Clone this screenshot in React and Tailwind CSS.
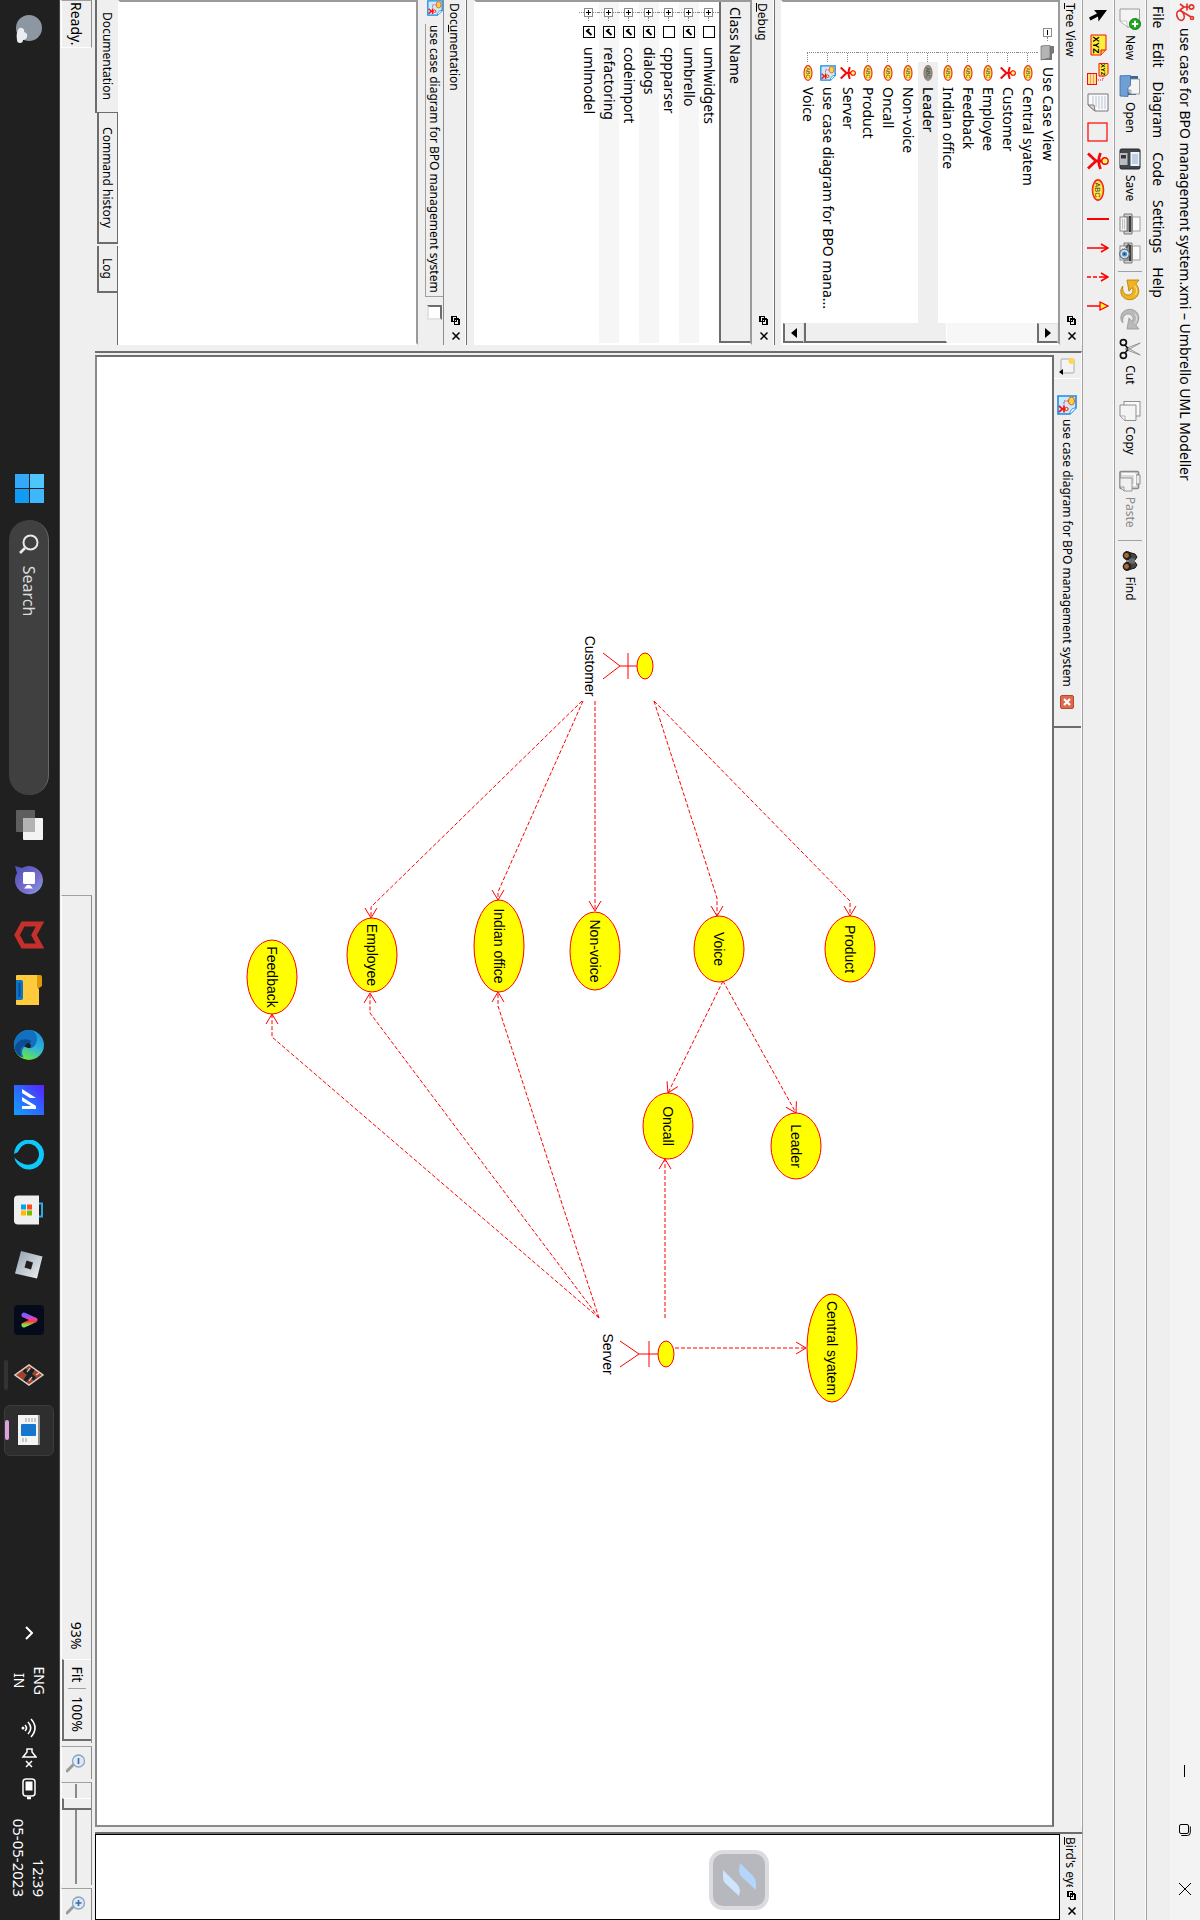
import React from "react";

/* ---------- small helpers ---------- */

const sunken = "border-2 border-t-[#9a9a9a] border-l-[#9a9a9a] border-r-white border-b-white";

function FloatIcon() {
  return (
    <svg viewBox="0 0 9 9" className="h-[9px] w-[9px]" stroke="#000" strokeWidth="1.2" fill="#efefef" shapeRendering="crispEdges">
      <path d="M3 1.5h5.500v4H3zM3 1h5.500M.5 3.500h5v4.500h-5zM0 3.500h6" />
    </svg>
  );
}

function CloseIcon() {
  return (
    <svg viewBox="0 0 8 8" className="h-2 w-2" stroke="#000" strokeWidth="1.5">
      <path d="M.5.5l7 7M7.500.5l-7 7" />
    </svg>
  );
}

function DockTitle({ children, name }) {
  return (
    <div className="flex h-[22px] shrink-0 items-start border-t border-white pr-px pl-[3px]">
      <h2 className="min-w-0 flex-1 overflow-hidden text-[12px] leading-[21px] whitespace-nowrap">{children}</h2>
      <button aria-label={`Float ${name}`} className="flex h-[18px] w-4 items-center justify-center"><FloatIcon /></button>
      <button aria-label={`Close ${name}`} className="flex h-[18px] w-4 items-center justify-center"><CloseIcon /></button>
    </div>
  );
}

/* ---------- tool icons ---------- */

function NewIcon() {
  return (
    <svg viewBox="0 0 22 22" className="h-[22px] w-[22px]">
      <path d="M1 1.500h18v12l-6 7.500H1z" fill="#f4f4f4" stroke="#9b9b9b" />
      <path d="M13 21v-6.500l6-1z" fill="#fff" stroke="#b5b5b5" strokeWidth=".7" />
      <circle cx="16" cy="6" r="5.600" fill="#1ea51e" stroke="#0c7a10" strokeWidth=".8" />
      <path d="M16 2.800v6.400M12.800 6h6.400" stroke="#fff" strokeWidth="2" />
    </svg>
  );
}

function OpenIcon() {
  return (
    <svg viewBox="0 0 22 22" className="h-[22px] w-[22px]">
      <path d="M1 3h7l2 2h10v14H1z" fill="#3a659c" />
      <path d="M4 1.500h15v9l-3 4H4z" fill="#f5f5f5" stroke="#8a8a8a" strokeWidth=".8" />
      <path d="M15 14v-4h4z" fill="#ccc" stroke="#888" strokeWidth=".6" />
      <path d="M.5 10.500h10l2 2.500h9l-.5 8H.8z" fill="#6f9fd3" stroke="#3b6ba6" strokeWidth=".8" />
    </svg>
  );
}

function SaveIcon() {
  return (
    <svg viewBox="0 0 22 22" className="h-[22px] w-[22px]">
      <rect x="1" y="1" width="20" height="20" rx="1.500" fill="#41464d" stroke="#25282c" />
      <rect x="4" y="1.500" width="14" height="9" fill="#eef3fa" />
      <path d="M6 4h10M6 6h10M6 8h10" stroke="#8aa4c8" strokeWidth=".9" />
      <rect x="5" y="13.500" width="12" height="7.500" fill="#b9bcc0" />
      <rect x="7" y="15" width="3.500" height="5" fill="#33373c" />
    </svg>
  );
}

function PrintIcon({ preview }) {
  return (
    <svg viewBox="0 0 22 22" className="h-[22px] w-[22px]">
      <rect x="4" y="1" width="14" height="9" fill="#fbfbfb" stroke="#9a9a9a" strokeWidth=".9" />
      <path d="M1 9h3v8H1zM18 9h3v8h-3z" fill="#d0d0d0" stroke="#6d6d6d" strokeWidth=".9" />
      <path d="M4 8h14v9H4z" fill="#8d8d8d" />
      <path d="M3 11h16" stroke="#3e3e3e" strokeWidth="2" />
      <rect x="4" y="14" width="14" height="7" fill="#f2f2f2" stroke="#808080" strokeWidth=".9" />
      <path d="M6 16.500h10M6 18.500h10" stroke="#b0b0b0" strokeWidth=".8" />
      {preview && (
        <g>
          <path d="M6 15l-4-3" stroke="#555" strokeWidth="2" />
          <circle cx="12" cy="16.500" r="4.800" fill="#cfe2f2" stroke="#66727c" strokeWidth="1.300" />
          <circle cx="12" cy="16.500" r="2.500" fill="#4b8fc9" />
          <circle cx="12" cy="16.500" r="1" fill="#123a5e" />
        </g>
      )}
    </svg>
  );
}

function UndoIcon({ redo }) {
  const fill = redo ? "#b9b9b9" : "#efb422";
  const edge = redo ? "#9b9b9b" : "#b8800c";
  return (
    <svg viewBox="0 0 22 22" className="h-[22px] w-[22px]">
      <g transform={redo ? "matrix(-1 0 0 1 22 0)" : undefined}>
        <path
          d="M1 2l4 3.200C8 2 14 .8 18 4.500c4 4 3.500 11-1 14.200-3 2-7 2-10-.5 4 .6 7.500-.4 8.600-3.400 1.300-3.500-1-6.800-4.400-6.800-1 0-2 .4-2.600 1l3.600 3L1 14z"
          fill={fill} stroke={edge} strokeWidth=".9"
        />
        <path d="M6.500 6.500C9 4 13.500 3.500 16 6" fill="none" stroke="#fff" strokeOpacity=".6" />
      </g>
    </svg>
  );
}

function CutIcon() {
  return (
    <svg viewBox="0 0 22 22" className="h-[22px] w-[22px]">
      <path d="M5 .8l7.500 13-2 1.500zM17 .8L9.500 13.800l2 1.500z" fill="#f3f3f3" stroke="#8a8a8a" strokeWidth=".9" />
      <ellipse cx="4.500" cy="17.600" rx="2.800" ry="3" fill="none" stroke="#111" strokeWidth="1.700" />
      <ellipse cx="17.500" cy="17.600" rx="2.800" ry="3" fill="none" stroke="#111" strokeWidth="1.700" />
      <path d="M7 16l3.500-3M15 16l-3.500-3" stroke="#111" strokeWidth="1.500" />
    </svg>
  );
}

function CopyIcon() {
  return (
    <svg viewBox="0 0 22 22" className="h-[22px] w-[22px]">
      <rect x="1.500" y="1" width="14.500" height="16" fill="#fafafa" stroke="#8f8f8f" />
      <path d="M5 5h15.500v11l-4.500 5H5z" fill="#f4f4f4" stroke="#8f8f8f" />
      <path d="M16 21v-5h4.500z" fill="#fff" stroke="#9a9a9a" strokeWidth=".8" />
    </svg>
  );
}

function PasteIcon() {
  return (
    <svg viewBox="0 0 22 22" className="h-[22px] w-[22px]">
      <rect x="1.500" y="2.500" width="17" height="18.500" rx="1" fill="#dadada" stroke="#8b8b8b" strokeWidth="1.600" />
      <path d="M5 1h9v4H5z" fill="#eee" stroke="#8b8b8b" />
      <path d="M4 6h11v4M4 6v13" stroke="#f8f8f8" strokeWidth="2" fill="none" />
      <path d="M8 9h13v8l-4 4H8z" fill="#f1f1f1" stroke="#979797" />
      <path d="M17 21v-4h4" fill="none" stroke="#979797" />
    </svg>
  );
}

function FindIcon() {
  return (
    <svg viewBox="0 0 22 22" className="h-[22px] w-[22px]">
      <path d="M4 6l3-2 3 2v9H1.500zM18 6l-3-2-3 2v9h8.500z" fill="#454545" stroke="#161616" />
      <rect x="8.500" y="6" width="5" height="6" fill="#6c6c6c" />
      <circle cx="5.500" cy="14" r="4.300" fill="#222" />
      <circle cx="16.500" cy="14" r="4.300" fill="#222" />
      <circle cx="5.500" cy="14.500" r="2.400" fill="#b06a2a" />
      <circle cx="16.500" cy="14.500" r="2.400" fill="#b06a2a" />
    </svg>
  );
}

function ActorGlyph({ className }) {
  return (
    <svg viewBox="0 0 20 22" className={className}>
      <ellipse cx="10" cy="4" rx="3.200" ry="3.200" fill="#ff6" stroke="#f00" strokeWidth="1.400" />
      <path d="M10 7v6M2 8.500q8 3.500 16 0M2.500 21l7.500-8 7.500 8" fill="none" stroke="#f00a0a" strokeWidth="2.800" />
    </svg>
  );
}

function UseCaseGlyph({ className, dim }) {
  return (
    <svg viewBox="0 0 24 14" className={className}>
      <ellipse cx="12" cy="7" rx="11" ry="6" fill={dim ? "#8f9a82" : "#ffe94a"} stroke={dim ? "#96707a" : "#f3311b"} strokeWidth="1.800" />
      <text x="12" y="10" textAnchor="middle" fontSize="8" fontFamily="Liberation Sans, sans-serif" fill="#333">ABC</text>
    </svg>
  );
}

function DiagramGlyph({ className }) {
  return (
    <svg viewBox="0 0 20 20" className={className}>
      <path d="M1 1h12l6 6v12H1z" fill="#cdeafd" stroke="#1d8be0" strokeWidth="1.600" />
      <path d="M13 1c0 4 2 6 6 6" fill="#fff" stroke="#1d8be0" />
      <ellipse cx="6" cy="5.500" rx="4" ry="3" fill="#ffd23e" stroke="#e4572a" />
      <path d="M6 9v4h4" fill="none" stroke="#e22" strokeDasharray="1.500 1" />
      <circle cx="14" cy="10.500" r="1.600" fill="#ff9" stroke="#f00" />
      <path d="M14 12v2.500M10.500 13h7M11 18l3-3.500 3 3.500" stroke="#f01818" strokeWidth="1.800" fill="none" />
    </svg>
  );
}

function ArrowPointer() {
  return (
    <svg viewBox="0 0 14 22" className="h-[22px] w-[14px]">
      <path d="M1 2v13l3.500-3 4 8 3-1.500-4-7.500 5-.5z" fill="#000" />
    </svg>
  );
}

function NoteGlyph() {
  return (
    <svg viewBox="0 0 22 22" className="h-[22px] w-[22px]">
      <path d="M1 3h15l5 5v10H1z" fill="#ffef3c" stroke="#e11" />
      <path d="M16 3v5h5" fill="#ffb14a" stroke="#e11" />
      <text x="11" y="16" textAnchor="middle" fontSize="9" fontWeight="700" fontFamily="Liberation Sans, sans-serif">XYZ</text>
    </svg>
  );
}

function AnchorGlyph() {
  return (
    <svg viewBox="0 0 22 22" className="h-[22px] w-[22px]">
      <path d="M.5 1h10l2.500 2.500V10H.5z" fill="#ffef3c" stroke="#e11" />
      <text x="6.500" y="8.500" textAnchor="middle" fontSize="6" fontWeight="700" fontFamily="Liberation Sans, sans-serif">XYZ</text>
      <path d="M13 6h4v6" fill="none" stroke="#e11" strokeDasharray="1 1" />
      <rect x="10.500" y="12.500" width="11" height="9" fill="#ffe07a" stroke="#e11" />
      <path d="M11 15.500h10M11 18.500h10" stroke="#e88" strokeWidth=".8" />
    </svg>
  );
}

function TextPageGlyph() {
  return (
    <svg viewBox="0 0 20 22" className="h-[22px] w-5">
      <path d="M1 1h17v13l-6 7H1z" fill="#fafafa" stroke="#777" />
      <path d="M3 4h13M3 7h13M3 10h13M3 13h11M3 16h8" stroke="#b8c4d8" strokeWidth="1" />
      <path d="M12 21v-6l6-1z" fill="#ddd" stroke="#777" />
    </svg>
  );
}

function LineGlyph({ kind }) {
  return (
    <svg viewBox="0 0 12 22" className="h-[22px] w-3" stroke="#f00" fill="none" strokeWidth="1.600">
      {kind === "plain" && <path d="M6 0v22" strokeWidth="2" />}
      {kind === "arrow" && <path d="M6 1v21M2 8l4-7 4 7" />}
      {kind === "dashed" && <path d="M6 22v-4m0-2v-4m0-2V1M2 8l4-7 4 7" />}
      {kind === "closed" && <path d="M6 9v13M2 9h8L6 1z" fill="#fe3" strokeWidth="1.300" />}
    </svg>
  );
}

/* ---------- bars ---------- */

function TitleBar() {
  return (
    <header className="flex h-[30px] shrink-0 items-center bg-[#f3f3f3] pl-[2px]">
      <svg viewBox="0 0 20 20" className="h-5 w-5" fill="none" stroke="#e0342c" strokeWidth="1.700">
        <ellipse cx="13.500" cy="14.500" rx="5" ry="3.500" transform="rotate(-20 13.500 14.500)" />
        <circle cx="5" cy="3.500" r="2.200" />
        <path d="M5 6v5M1.500 8h7M2 15l3-4 3 4M8 15.500L15 4" />
        <circle cx="16" cy="3" r="1.500" />
      </svg>
      <h1 className="ml-[6px] flex-1 text-[14px] leading-5 whitespace-nowrap">use case for BPO management system.xmi – Umbrello UML Modeller</h1>
      <button aria-label="Minimize" className="flex h-full w-[59px] items-center justify-center">
        <svg viewBox="0 0 12 12" className="h-3 w-3" stroke="#000"><path d="M0 6.500h12" /></svg>
      </button>
      <button aria-label="Restore" className="flex h-full w-[59px] items-center justify-center">
        <svg viewBox="0 0 12 12" className="h-3 w-3" stroke="#000" fill="none"><rect x=".5" y="2.500" width="9" height="9" rx="1.500" /><path d="M2.500.7h6a3 3 0 0 1 3 3v6" /></svg>
      </button>
      <button aria-label="Close" className="mr-[2px] flex h-full w-[59px] items-center justify-center">
        <svg viewBox="0 0 12 12" className="h-3 w-3" stroke="#000"><path d="M0 0l12 12M12 0L0 12" /></svg>
      </button>
    </header>
  );
}

function MenuBar() {
  return (
    <nav className="flex h-6 shrink-0 items-center gap-[14px] border-b border-[#a0a0a0] pl-[6px] text-[14px] leading-5">
      {["File", "Edit", "Diagram", "Code", "Settings", "Help"].map((m) => (
        <button key={m}>{m}</button>
      ))}
    </nav>
  );
}

function ToolButton({ icon, label, disabled }) {
  return (
    <button aria-label={label} className={`flex items-center gap-[5px] text-[12px] leading-4 ${disabled ? "text-[#8a8a8a]" : ""}`}>
      {icon}
      <span>{label}</span>
    </button>
  );
}

function MainToolbar() {
  return (
    <div className="flex h-8 shrink-0 items-center border-t border-b border-t-white border-b-[#a0a0a0] pl-2">
      <div className="flex items-center gap-[15px]">
        <ToolButton icon={<NewIcon />} label="New" />
        <ToolButton icon={<OpenIcon />} label="Open" />
        <ToolButton icon={<SaveIcon />} label="Save" />
      </div>
      <button aria-label="Print" className="ml-3"><PrintIcon /></button>
      <button aria-label="Print preview" className="ml-[7px]"><PrintIcon preview /></button>
      <span className="mx-[7px] h-6 w-px bg-[#a0a0a0]" />
      <button aria-label="Undo"><UndoIcon /></button>
      <button aria-label="Redo" className="ml-[7px]"><UndoIcon redo /></button>
      <div className="ml-2 flex items-center gap-[15px]">
        <ToolButton icon={<CutIcon />} label="Cut" />
        <ToolButton icon={<CopyIcon />} label="Copy" />
        <ToolButton icon={<PasteIcon />} label="Paste" disabled />
      </div>
      <span className="mr-[9px] ml-3 h-6 w-px bg-[#a0a0a0]" />
      <ToolButton icon={<FindIcon />} label="Find" />
    </div>
  );
}

function DiagramToolbar() {
  const tools = [
    ["Select", <ArrowPointer />],
    ["Note", <NoteGlyph />],
    ["Anchor", <AnchorGlyph />],
    ["Text line", <TextPageGlyph />],
    ["Box", <svg viewBox="0 0 20 22" className="h-[22px] w-5"><rect x="1" y="2" width="18" height="19" fill="none" stroke="#f00" strokeWidth="1.200" /></svg>],
    ["Actor", <ActorGlyph className="h-[22px] w-5" />],
    ["Use case", <UseCaseGlyph className="h-[14px] w-[22px]" />],
    ["Association", <LineGlyph kind="plain" />],
    ["Directional association", <LineGlyph kind="arrow" />],
    ["Dependency", <LineGlyph kind="dashed" />],
    ["Generalization", <LineGlyph kind="closed" />],
  ];
  return (
    <div className="flex h-8 shrink-0 items-center gap-[3px] border-t border-b border-t-white border-b-[#a0a0a0] pl-[3px]">
      {tools.map(([name, icon]) => (
        <button key={name} aria-label={name} className="flex h-[26px] w-[26px] items-center justify-center">{icon}</button>
      ))}
    </div>
  );
}

/* ---------- left docks ---------- */

const treeItems = [
  ["Central syatem", "case"], ["Customer", "actor"], ["Employee", "case"], ["Feedback", "case"],
  ["Indian office", "case"], ["Leader", "case"], ["Non-voice", "case"], ["Oncall", "case"],
  ["Product", "case"], ["Server", "actor"], ["use case diagram for BPO mana...", "diagram"], ["Voice", "case"],
];

function Expander({ open }) {
  return (
    <svg viewBox="0 0 9 9" className="h-[9px] w-[9px] shrink-0" fill="#fff" stroke="#8c8c8c" shapeRendering="crispEdges">
      <rect x=".5" y=".5" width="8" height="8" />
      <path d={open ? "M2 4.500h5" : "M2 4.500h5M4.500 2v5"} stroke="#000" />
    </svg>
  );
}

function ScrollArrow({ up }) {
  return (
    <button aria-label={up ? "Scroll up" : "Scroll down"} className="flex h-[21px] shrink-0 items-center justify-center border-t border-r-2 border-b-2 border-l border-t-[#e3e3e3] border-r-[#6d6d6d] border-b-[#6d6d6d] border-l-[#e3e3e3] bg-[#efefef]">
      <svg viewBox="0 0 10 6" className="h-[6px] w-[10px]"><path d={up ? "M0 6L5 0l5 6z" : "M0 0l5 6 5-6z"} fill="#000" /></svg>
    </button>
  );
}

function TreeDock() {
  return (
    <section className="flex h-[308px] shrink-0 flex-col border-b border-[#6d6d6d]">
      <DockTitle name="Tree View"><u>T</u>ree View</DockTitle>
      <div className={`mb-[6px] flex min-h-0 flex-1 bg-white ${sunken}`}>
        <div className="min-w-0 flex-1 text-[14px] leading-5">
          <div className="flex h-5 items-center pl-[26px]">
            <Expander open />
            <span className="w-1 border-t border-dotted border-[#888]" />
            <svg viewBox="0 0 16 16" className="ml-1 h-4 w-4"><path d="M1 2h7l1 2h6v11H1z" fill="#777" /><path d="M0 6h13l2 9H1z" fill="#b4b4b4" stroke="#6c6c6c" strokeWidth=".7" /></svg>
            <span className="ml-[6px]">Use Case View</span>
          </div>
          <ul className="ml-[50px]">
            {treeItems.map(([name, kind], i) => (
              <li key={name} className="flex h-5 items-stretch">
                <span className={`w-px border-l border-dotted border-[#888] ${i === treeItems.length - 1 ? "h-[11px]" : ""}`} />
                <span className="h-[11px] w-[9px] border-b border-dotted border-[#888]" />
                <span className={`flex flex-1 items-center pl-[3px] ${name === "Leader" ? "bg-[#efefef]" : ""}`}>
                  {kind === "case" && <UseCaseGlyph className="h-[10px] w-4" dim={name === "Leader"} />}
                  {kind === "actor" && <ActorGlyph className="h-4 w-4" />}
                  {kind === "diagram" && <DiagramGlyph className="h-4 w-4" />}
                  <span className="ml-[6px] whitespace-nowrap">{name}</span>
                </span>
              </li>
            ))}
          </ul>
        </div>
        <div className="flex w-5 shrink-0 flex-col bg-[#f7f7f7]">
          <ScrollArrow up />
          <div className="flex-1" />
          <div className="h-[143px] border-t border-r-2 border-b-2 border-t-white border-r-[#6d6d6d] border-b-[#6d6d6d] bg-[#efefef]" />
          <ScrollArrow />
        </div>
      </div>
    </section>
  );
}

function DebugDock() {
  const rows = [["umlwidgets", false], ["umbrello", true], ["cppparser", false], ["dialogs", true], ["codeimport", true], ["refactoring", true], ["umlmodel", true]];
  return (
    <section className="flex h-[308px] shrink-0 flex-col border-b border-[#6d6d6d]">
      <DockTitle name="Debug"><u>D</u>ebug</DockTitle>
      <div className={`mb-[7px] min-h-0 flex-1 bg-white ${sunken}`}>
        <div className="h-[31px] border-r-2 border-b-2 border-[#6d6d6d] bg-[#efefef] pl-[5px] text-[14px] leading-[30px]">Class Name</div>
        <ul className="text-[14px] leading-5">
          {rows.map(([name, on]) => (
            <li key={name} className="flex h-5 items-center pl-[6px] even:bg-[#f6f6f6]">
              <span className="flex h-5 flex-col items-center">
                <span className="flex-1 border-l border-dotted border-[#888]" />
                <Expander />
                <span className="flex-1 border-l border-dotted border-[#888]" />
              </span>
              <span className="w-1 border-t border-dotted border-[#888]" />
              <label className="flex items-center">
                <span className="ml-[5px] grid h-3 w-3 items-center">
                  <input type="checkbox" defaultChecked={on} className="peer col-start-1 row-start-1 h-3 w-3 appearance-none border border-black bg-white" />
                  <svg viewBox="0 0 12 12" className="pointer-events-none invisible col-start-1 row-start-1 h-3 w-3 peer-checked:visible" fill="none" stroke="#000" strokeWidth="2"><path d="M3 5.500l2 2.500 4-4.500" /></svg>
                </span>
                <span className="ml-[9px]">{name}</span>
              </label>
            </li>
          ))}
        </ul>
      </div>
    </section>
  );
}

function DocumentationDock() {
  return (
    <section className="flex min-h-0 flex-1 flex-col">
      <DockTitle name="Documentation">Doc<u>u</u>mentation</DockTitle>
      <div className="flex h-[26px] shrink-0 items-start border-t border-[#8c8c8c]">
        <DiagramGlyph className="h-4 w-4" />
        <label htmlFor="doc-modified" className="ml-2 border-r border-b border-[#a0a0a0] pr-[3px] pl-px text-[12px] leading-[17px] whitespace-nowrap">use case diagram for BPO management system</label>
        <input id="doc-modified" type="checkbox" className="mt-px ml-2 h-[15px] w-[15px] appearance-none border-2 border-t-[#6d6d6d] border-r-[#e3e3e3] border-b-[#e3e3e3] border-l-[#6d6d6d] bg-white" />
      </div>
      <textarea aria-label="Documentation text" className={`block min-h-0 w-full flex-1 resize-none bg-white outline-none ${sunken}`} />
      <div role="tablist" className="flex h-[23px] shrink-0 items-start text-[12px] leading-5">
        <button role="tab" aria-selected="true" className="h-[23px] w-[113px] border-r border-b-2 border-[#6d6d6d]">Documentation</button>
        <button role="tab" aria-selected="false" className="h-[21px] w-[131px] border-t border-r-2 border-b-2 border-[#6d6d6d]">Command history</button>
        <button role="tab" aria-selected="false" className="ml-[2px] h-[21px] w-[47px] border-t border-r-2 border-b-2 border-[#6d6d6d]">Log</button>
        <span className="h-px flex-1 bg-[#6d6d6d]" />
      </div>
    </section>
  );
}

/* ---------- diagram canvas ---------- */

const useCases = [
  ["Product", 949, 350, 33], ["Voice", 949, 481, 33], ["Non-voice", 951, 605, 39],
  ["Indian office", 946, 701, 46], ["Employee", 955, 828, 37], ["Feedback", 977, 928, 37],
  ["Oncall", 1126, 532, 33], ["Leader", 1146, 404, 33], ["Central syatem", 1348, 368, 54],
];

/* name, x, head y, hip y, feet y, label y */
const actors = [["Customer", 666, 555, 580, 597, 610], ["Server", 1354, 534, 561, 580, 592]];

const links = [
  "M701 546L901 350H916", "M701 546L898 483H916", "M701 605H911", "M701 617L892 702L900 702",
  "M701 618L907 829H918", "M1318 601L1006 702H992", "M1318 601L1013 830H993", "M1318 601L1037 928H1014",
  "M1318 535H1159", "M1348 525V394", "M981 477L1113 404", "M981 477L1093 532",
];

const heads = [
  [916, 350, 0], [916, 483, 0], [911, 605, 0], [900, 702, 0], [918, 829, 0],
  [992, 702, 180], [993, 830, 180], [1014, 928, 180], [1159, 535, 180], [1348, 394, -90],
  [1113, 404, -29], [1093, 532, 26],
];

function Canvas() {
  return (
    <svg className="block h-full w-full" role="img" aria-label="Use case diagram" fontFamily="Liberation Sans, Arial, sans-serif" fontSize="14">
      <g transform="translate(-357 -148)">
        <g fill="none" stroke="#f00">
          <g strokeDasharray="4 2">{links.map((d) => <path key={d} d={d} />)}</g>
          {heads.map(([x, y, a]) => <path key={`${x}-${y}`} d="M-10 -6L0 0L-10 6" transform={`translate(${x} ${y}) rotate(${a})`} />)}
        </g>
        {useCases.map(([name, x, y, rx]) => (
          <g key={name}>
            <ellipse cx={x} cy={y} rx={rx} ry="25" fill="#ff0" stroke="#f00" />
            <text x={x} y={y + 5} textAnchor="middle">{name}</text>
          </g>
        ))}
        {actors.map(([name, x, y, hip, feet, ty]) => (
          <g key={name}>
            <path d={`M${x} ${y}V${hip}M${x - 13} ${y + 17}h26M${x - 13} ${feet}L${x} ${hip}L${x + 13} ${feet}`} fill="none" stroke="#f00" />
            <ellipse cx={x} cy={y} rx="13" ry="8" fill="#ff0" stroke="#f00" />
            <text x={x} y={ty + 5} textAnchor="middle">{name}</text>
          </g>
        ))}
      </g>
    </svg>
  );
}

function DiagramArea() {
  return (
    <main className="flex min-w-0 flex-1 flex-col border-t border-l-2 border-t-white border-l-[#6d6d6d]">
      <div className="flex h-[27px] shrink-0 items-center">
        <button aria-label="New diagram" className="flex h-full w-[26px] items-center justify-center border-r border-white">
          <svg viewBox="0 0 20 16" className="h-4 w-5">
            <rect x="3" y="1" width="14" height="13" rx="1" fill="#f4f4f4" stroke="#aaa" />
            <circle cx="5" cy="3.500" r="3" fill="#ffd84a" />
            <path d="M13 12h6l-3 4z" fill="#000" />
          </svg>
        </button>
        <div role="tab" aria-selected="true" className="flex h-full items-center border-r-2 border-[#6d6d6d] pr-[17px] pl-4">
          <DiagramGlyph className="h-5 w-5" />
          <span className="ml-1 text-[12px] leading-5 whitespace-nowrap">use case diagram for BPO management system</span>
          <button aria-label="Close diagram" className="ml-2 flex h-[14px] w-[14px] items-center justify-center rounded-[2px] border border-[#b8452c] bg-[#dd6a4e]">
            <svg viewBox="0 0 8 8" className="h-2 w-2" stroke="#fff" strokeWidth="2.200"><path d="M1 1l6 6M7 1L1 7" /></svg>
          </button>
        </div>
      </div>
      <div className="ml-[2px] min-h-0 flex-1 overflow-hidden border-2 border-t-[#6d6d6d] border-r-[#8a8a8a] border-b-[#8a8a8a] border-l-[#6d6d6d] bg-white">
        <Canvas />
      </div>
    </main>
  );
}

function BirdsEye() {
  return (
    <aside className="ml-[5px] flex w-[88px] shrink-0 flex-col border-l-2 border-[#6d6d6d]">
      <DockTitle name="Bird's eye view"><u>B</u>ird's eye</DockTitle>
      <div className="flex flex-1 items-start border border-black bg-white pt-[290px] pl-[15px]">
        <div className="flex h-[60px] w-[60px] items-center justify-center rounded-[14px] border-4 border-[#dcdce0] bg-[#b7b8be]">
          <svg viewBox="0 0 34 34" className="h-[34px] w-[34px]">
            <path d="M0 17L13 4q3-3 7-3h7L14 15q-3 3-7 3z" fill="#b5d6fb" transform="translate(0 -1)" />
            <path d="M33 17L20 31q-2 2-7 2H7L21 19q3-3 7-3z" fill="#cfe5fd" />
          </svg>
        </div>
      </div>
    </aside>
  );
}

/* ---------- status bar ---------- */

function ZoomGlyph({ plus }) {
  return (
    <svg viewBox="0 0 20 20" className="h-5 w-5">
      <path d="M12 13l6 6" stroke="#9a9a9a" strokeWidth="3" strokeLinecap="round" />
      <circle cx="8" cy="7.500" r="6" fill="#dbe9f8" stroke="#8ea4bd" strokeWidth="1.300" />
      <path d={plus ? "M5 7.500h6M8 4.500v6" : "M5 7.500h6"} stroke="#44699a" strokeWidth="1.600" />
    </svg>
  );
}

function StatusBar() {
  const cell = "flex h-[31px] items-center border-t border-l border-b border-t-[#8a8a8a] border-l-[#a0a0a0] border-b-white";
  return (
    <footer className="flex h-[35px] shrink-0 items-end pb-px text-[14px] leading-5">
      <div className={`${cell} w-12 border-r border-r-white pl-px`}>Ready.</div>
      <div className="flex-1" />
      <div className={`${cell} w-[848px] justify-end pr-[2px]`}>
        <span className="mr-[10px]">93%</span>
        <div className="flex h-[29px] items-center border-r-2 border-b-2 border-l border-[#6d6d6d] border-l-white">
          <button className="px-[6px]">Fit</button>
          <span className="h-[18px] w-px bg-[#a0a0a0]" />
          <button className="px-[7px]">100%</button>
        </div>
      </div>
      <button aria-label="Zoom out" className={`${cell} ml-[3px] w-[33px] justify-center`}><ZoomGlyph /></button>
      <div className={`${cell} ml-[3px] w-[103px] px-px`}>
        <input
          type="range" aria-label="Zoom" defaultValue="16"
          className="h-[29px] w-full appearance-none bg-transparent [&::-webkit-slider-runnable-track]:h-[2px] [&::-webkit-slider-runnable-track]:bg-[#8a8a8a] [&::-webkit-slider-thumb]:-mt-[14px] [&::-webkit-slider-thumb]:h-[29px] [&::-webkit-slider-thumb]:w-3 [&::-webkit-slider-thumb]:appearance-none [&::-webkit-slider-thumb]:border-r-2 [&::-webkit-slider-thumb]:border-b-2 [&::-webkit-slider-thumb]:border-l [&::-webkit-slider-thumb]:border-[#6d6d6d] [&::-webkit-slider-thumb]:border-l-white [&::-webkit-slider-thumb]:bg-[#efefef]"
        />
      </div>
      <button aria-label="Zoom in" className={`${cell} ml-[3px] w-8 justify-center`}><ZoomGlyph plus /></button>
    </footer>
  );
}

/* ---------- taskbar ---------- */

const apps = {
  "Task view": (
    <svg viewBox="0 0 30 30" className="h-[30px] w-[30px]">
      <rect x="0" y="9" width="22" height="19" rx="1" fill="#5e5e5e" />
      <rect x="8" y="1" width="22" height="20" rx="1" fill="#f3f3f3" />
      <rect x="8" y="9" width="14" height="12" fill="#b3b3b3" />
    </svg>
  ),
  Chat: (
    <svg viewBox="0 0 30 30" className="h-[30px] w-[30px]">
      <defs><linearGradient id="chat" x1="0" y1="1" x2="1" y2="0"><stop offset="0" stopColor="#4b53bc" /><stop offset=".6" stopColor="#7b6cc9" /><stop offset="1" stopColor="#7ea6ea" /></linearGradient></defs>
      <path d="M15 1a14 14 0 1 1-7 26l-7 2 2-7A14 14 0 0 1 15 1z" fill="url(#chat)" />
      <rect x="7" y="9" width="12" height="12" rx="1.500" fill="#fff" />
      <path d="M20 14l3.500-3v9L20 17z" fill="#fff" />
    </svg>
  ),
  McAfee: (
    <svg viewBox="0 0 30 30" className="h-[30px] w-[30px]">
      <path d="M4 4l11 6 11-6v17l-11 6-11-6z" fill="none" stroke="#c5302c" strokeWidth="5" />
    </svg>
  ),
  "File Explorer": (
    <svg viewBox="0 0 30 30" className="h-[30px] w-[30px]">
      <path d="M0 4q0-2 2-2h9l2 3v5H0z" fill="#dc9a09" />
      <path d="M0 7h12l2-2h16v22q0 1-1 1H1q-1 0-1-1z" fill="#ffcb3d" />
      <path d="M5 28v-5q0-2 2-2h16q2 0 2 2v5z" fill="#0f74c8" />
      <path d="M8 24.500h14" stroke="#0a4f92" strokeWidth="2" />
    </svg>
  ),
  Edge: (
    <svg viewBox="0 0 30 30" className="h-[30px] w-[30px]">
      <defs>
        <linearGradient id="edgeA" x1="0" y1="0" x2="1" y2=".5"><stop offset="0" stopColor="#1686dd" /><stop offset=".6" stopColor="#2fb8d8" /><stop offset="1" stopColor="#6be34a" /></linearGradient>
      </defs>
      <circle cx="15" cy="15" r="15" fill="url(#edgeA)" />
      <path d="M0 15C1 8 7 6 12 7.500c5 1.500 7 5 6 8-1 2-2 3 0 5s7 2 9.500-.5C25 27 20 30 15 30 6 30 0 23 0 15z" fill="#1270bf" />
      <path d="M11 13c-4 6-1 14 7 16.500 4-.8 8-4 9.500-8-4 3-9 2.500-11 0-2-2-1-4 .5-6z" fill="#0d4c94" />
      <path d="M13.500 14.500c1-2 4-2 4.500 0s-1.500 3-1 5c-3-1-4.500-3-3.500-5z" fill="#1f1f1f" />
    </svg>
  ),
  "M app": (
    <svg viewBox="0 0 30 30" className="h-[30px] w-[30px]">
      <defs><linearGradient id="mbase" x1="1" y1="1" x2="0" y2="0"><stop offset="0" stopColor="#12a0ff" /><stop offset=".5" stopColor="#2c68ff" /><stop offset="1" stopColor="#5a20ff" /></linearGradient></defs>
      <rect width="30" height="30" fill="url(#mbase)" />
      <path d="M4 22L13 8v6L8 22zM12 22l9-14v5l-5 9zM21 8h3v14h-3z" fill="#fff" />
    </svg>
  ),
  Alexa: (
    <svg viewBox="0 0 30 30" className="h-[30px] w-[30px]">
      <path d="M14 30A15 15 0 1 1 17 29.800C20 28 24 22 24.500 18a10.500 10.500 0 1 0-13.500 7.500C12.500 26 13 28 14 30z" fill="#0cc8fb" />
    </svg>
  ),
  Store: (
    <svg viewBox="0 0 30 30" className="h-[30px] w-[30px]">
      <path d="M8.500 6V2h13v4" fill="none" stroke="#2aa9e4" strokeWidth="2" />
      <path d="M.5 5h29v21q0 4-4 4h-21q-4 0-4-4z" fill="#f0eff0" />
      <path d="M9.500 12h5v5h-5z" fill="#f25022" /><path d="M15.500 12h5v5h-5z" fill="#7fba00" />
      <path d="M9.500 18h5v5h-5z" fill="#00a4ef" /><path d="M15.500 18h5v5h-5z" fill="#ffb900" />
    </svg>
  ),
  Roblox: (
    <svg viewBox="0 0 30 30" className="h-[30px] w-[30px]">
      <defs><linearGradient id="rbx" x1="0" y1="1" x2="1" y2="0"><stop offset="0" stopColor="#8f9dad" /><stop offset="1" stopColor="#f2f4f6" /></linearGradient></defs>
      <path d="M6.500 1.500l22 5.500-5 22-22.500-6z" fill="url(#rbx)" />
      <path d="M12.500 11l7 2-2 6.500-7-2z" fill="#1f1f1f" />
    </svg>
  ),
  Video: (
    <svg viewBox="0 0 30 30" className="h-[30px] w-[30px]">
      <defs><linearGradient id="vid" x1="0" y1=".6" x2="1" y2=".6"><stop offset="0" stopColor="#7b5cff" /><stop offset=".4" stopColor="#e843b0" /><stop offset=".65" stopColor="#ff3b30" /><stop offset="1" stopColor="#8be04a" /></linearGradient></defs>
      <rect width="30" height="30" rx="4" fill="#050b1d" />
      <path d="M10 20l5-11 5 11" fill="none" stroke="url(#vid)" strokeWidth="5" strokeLinejoin="round" strokeLinecap="round" />
    </svg>
  ),
  Scratch: (
    <svg viewBox="0 0 30 30" className="h-[30px] w-[30px]">
      <path d="M15 1l10 14-10 14L5 15z" fill="#a3402c" stroke="#d9cfc6" strokeWidth="1.500" />
      <path d="M9 11l12 8M10 20l9-11" stroke="#12242a" strokeWidth="4" />
      <path d="M8 14l4 3M17 12l4 3M13 5l2 3" stroke="#d9cfc6" strokeWidth="1.200" />
    </svg>
  ),
  Umbrello: (
    <svg viewBox="0 0 30 30" className="h-[30px] w-[30px]">
      <rect x="0" y="4" width="30" height="22" fill="#f4f4f4" />
      <path d="M0 5h30" stroke="#8d8d8d" strokeWidth="2" />
      <rect x="9" y="8" width="12" height="15" rx="1" fill="#1477cd" />
      <path d="M3 9h4M3 12h4M3 15h4M3 18h4M23 18h4M23 21h4" stroke="#9b9b9b" />
    </svg>
  ),
};

function Taskbar() {
  return (
    <nav aria-label="Taskbar" className="flex h-[60px] shrink-0 items-center border-t border-[#4b4845] bg-[#202020] text-white">
      <button aria-label="Weather" className="ml-[14px] flex w-[30px] justify-center">
        <svg viewBox="0 0 28 28" className="h-7 w-7"><circle cx="13" cy="14" r="13" fill="#8d97a1" /><path d="M15 25q-3-1-2-4 1-3 4-2 1-4 5-3 3 1 3 4 3 0 3 3t-3 3q-6 1-10-1z" fill="#e9edf0" /></svg>
      </button>
      <div className="flex-1" />
      <div className="flex items-center">
        <button aria-label="Start" className="grid h-[29px] w-[29px] grid-cols-2 gap-px">
          <span className="bg-[#4fc6fb]" /><span className="bg-[#3eb8fa]" /><span className="bg-[#35a9f9]" /><span className="bg-[#129bf5]" />
        </button>
        <label className="ml-[17px] flex h-10 w-[275px] items-center rounded-full border-t border-[#686868] bg-[#404040] pl-[14px]">
          <svg viewBox="0 0 20 20" className="h-5 w-5" fill="none" stroke="#e8e8e8" strokeWidth="2"><circle cx="8.500" cy="8.500" r="7" /><path d="M14 14l5 5" strokeWidth="2.600" /></svg>
          <input aria-label="Search" placeholder="Search" className="ml-3 w-48 bg-transparent text-[16px] leading-6 outline-none placeholder:text-[#dcdcdc]" />
        </label>
        <div className="ml-[3px] flex">
          {Object.entries(apps).map(([name, icon]) => (
            <button
              key={name} aria-label={name}
              className={`relative mx-[2px] flex h-[50px] w-[51px] items-center justify-center ${name === "Umbrello" ? "rounded-md border border-[#3c3c3c] bg-[#2e2e2e]" : ""}`}
            >
              {icon}
              {name === "Umbrello" && <span className="absolute bottom-0 h-1 w-5 rounded-full bg-[#dca0e0]" />}
              {name === "Scratch" && <span className="absolute bottom-0 h-1 w-[30px] rounded-full bg-[#333]" />}
            </button>
          ))}
        </div>
      </div>
      <div className="w-[168px]" />
      <div className="flex items-center pr-[23px] text-[15px] leading-5">
        <button aria-label="Show hidden icons"><svg viewBox="0 0 14 8" className="h-2 w-[14px]" fill="none" stroke="#fff" strokeWidth="2"><path d="M1 7l6-6 6 6" /></svg></button>
        <div className="ml-[26px] w-[30px] text-center text-[14px]">ENG<br />IN</div>
        <svg viewBox="0 0 20 16" className="ml-[22px] h-4 w-5" fill="none" stroke="#fff" strokeWidth="1.600"><path d="M1 6q9-8 18 0M4 9q6-5.500 12 0M7 12q3-3 6 0" /><circle cx="10" cy="14" r="1.500" fill="#fff" stroke="none" /></svg>
        <svg viewBox="0 0 20 16" className="ml-[10px] h-4 w-5" fill="none" stroke="#fff" strokeWidth="1.500"><path d="M1 5h3l5-4v13l-5-4H1zM13 5l6 6M19 5l-6 6" /></svg>
        <svg viewBox="0 0 22 14" className="ml-[10px] h-[14px] w-[22px]" fill="none" stroke="#fff" strokeWidth="1.500"><rect x="1" y="1" width="17" height="12" rx="3" /><rect x="3.500" y="3.500" width="9" height="7" fill="#fff" stroke="none" /><path d="M20 5v4" strokeWidth="2.500" /></svg>
        <div className="ml-[19px] text-right whitespace-nowrap">12:39<br />05-05-2023</div>
      </div>
    </nav>
  );
}

/* The whole desktop is a landscape screen shown turned a quarter clockwise. */
export default function App() {
  return (
    <div className="h-screen w-screen overflow-hidden">
      <div className="flex h-[100vw] w-[100vh] origin-top-left [transform:translateX(100vw)_rotate(90deg)] flex-col bg-[#efefef] font-['Noto_Sans','Open_Sans',sans-serif] text-black">
        <TitleBar />
        <MenuBar />
        <MainToolbar />
        <DiagramToolbar />
        <div className="flex min-h-0 flex-1">
          <div className="mr-[6px] flex w-[345px] shrink-0 flex-col">
            <TreeDock />
            <DebugDock />
            <DocumentationDock />
          </div>
          <DiagramArea />
          <BirdsEye />
        </div>
        <StatusBar />
        <Taskbar />
      </div>
    </div>
  );
}
